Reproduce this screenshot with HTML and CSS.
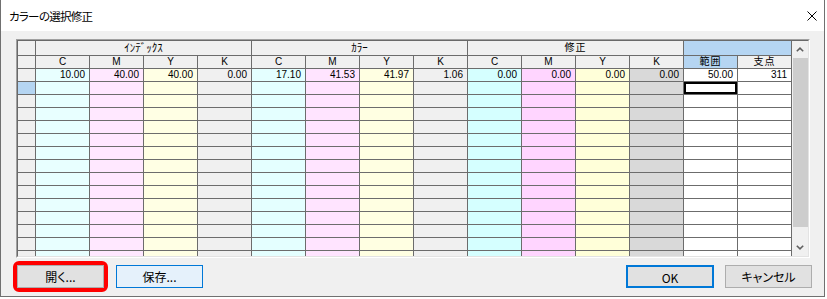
FILE: index.html
```html
<!DOCTYPE html>
<html lang="ja">
<head>
  <meta charset="UTF-8">
  <title>カラーの選択修正</title>
  <link rel="stylesheet" href="styles.css">
</head>
<body>
  <div id="dialog">
    <div class="titlebar">
      <span class="title">カラーの選択修正</span>
      <svg class="close" width="10" height="10" viewBox="0 0 10 10"><path d="M0.5 0.5L9.5 9.5M9.5 0.5L0.5 9.5" stroke="#000" stroke-width="1" fill="none"/></svg>
    </div>
    <div class="gridarea">
      <div class="grid">
        <div class="grid-in">
          <div class="cells">
            <table>
              <colgroup>
                <col class="rh">
                <col class="ic"><col class="im"><col class="iy"><col class="ik">
                <col class="cc"><col class="cm"><col class="cy"><col class="ck">
                <col class="sc"><col class="sm"><col class="sy"><col class="sk">
                <col class="rg"><col class="pt">
              </colgroup>
              <tr class="h1"><th></th><th colspan="4">ｲﾝﾃﾞｯｸｽ</th><th colspan="4">ｶﾗｰ</th><th colspan="4" class="kanji">修正</th><th colspan="2" class="sel"></th></tr>
              <tr class="h2"><th></th><th>C</th><th>M</th><th>Y</th><th>K</th><th>C</th><th>M</th><th>Y</th><th>K</th><th>C</th><th>M</th><th>Y</th><th>K</th><th class="sel kanji">範囲</th><th class="kanji">支点</th></tr>
              <tr><th></th><td>10.00</td><td>40.00</td><td>40.00</td><td>0.00</td><td>17.10</td><td>41.53</td><td>41.97</td><td>1.06</td><td>0.00</td><td>0.00</td><td>0.00</td><td>0.00</td><td>50.00</td><td>311</td></tr>
              <tr><th class="sel"></th><td></td><td></td><td></td><td></td><td></td><td></td><td></td><td></td><td></td><td></td><td></td><td></td><td class="focus"></td><td></td></tr>
              <tr><th></th><td></td><td></td><td></td><td></td><td></td><td></td><td></td><td></td><td></td><td></td><td></td><td></td><td></td><td></td></tr>
              <tr><th></th><td></td><td></td><td></td><td></td><td></td><td></td><td></td><td></td><td></td><td></td><td></td><td></td><td></td><td></td></tr>
              <tr><th></th><td></td><td></td><td></td><td></td><td></td><td></td><td></td><td></td><td></td><td></td><td></td><td></td><td></td><td></td></tr>
              <tr><th></th><td></td><td></td><td></td><td></td><td></td><td></td><td></td><td></td><td></td><td></td><td></td><td></td><td></td><td></td></tr>
              <tr><th></th><td></td><td></td><td></td><td></td><td></td><td></td><td></td><td></td><td></td><td></td><td></td><td></td><td></td><td></td></tr>
              <tr><th></th><td></td><td></td><td></td><td></td><td></td><td></td><td></td><td></td><td></td><td></td><td></td><td></td><td></td><td></td></tr>
              <tr><th></th><td></td><td></td><td></td><td></td><td></td><td></td><td></td><td></td><td></td><td></td><td></td><td></td><td></td><td></td></tr>
              <tr><th></th><td></td><td></td><td></td><td></td><td></td><td></td><td></td><td></td><td></td><td></td><td></td><td></td><td></td><td></td></tr>
              <tr><th></th><td></td><td></td><td></td><td></td><td></td><td></td><td></td><td></td><td></td><td></td><td></td><td></td><td></td><td></td></tr>
              <tr><th></th><td></td><td></td><td></td><td></td><td></td><td></td><td></td><td></td><td></td><td></td><td></td><td></td><td></td><td></td></tr>
              <tr><th></th><td></td><td></td><td></td><td></td><td></td><td></td><td></td><td></td><td></td><td></td><td></td><td></td><td></td><td></td></tr>
              <tr><th></th><td></td><td></td><td></td><td></td><td></td><td></td><td></td><td></td><td></td><td></td><td></td><td></td><td></td><td></td></tr>
              <tr><th></th><td></td><td></td><td></td><td></td><td></td><td></td><td></td><td></td><td></td><td></td><td></td><td></td><td></td><td></td></tr>
            </table>
          </div>
          <div class="vscroll">
            <div class="arrow"><svg width="8" height="5" viewBox="0 0 8 5"><path d="M0.8 4.3L4 1.2L7.2 4.3" stroke="#606060" stroke-width="1.6" fill="none"/></svg></div>
            <div class="thumb"></div>
            <div class="track"></div>
            <div class="arrow"><svg width="8" height="5" viewBox="0 0 8 5"><path d="M0.8 0.7L4 3.8L7.2 0.7" stroke="#606060" stroke-width="1.6" fill="none"/></svg></div>
          </div>
        </div>
      </div>
    </div>
    <div class="buttons">
      <div class="left">
        <span class="mark"><button class="btn">開く...</button></span>
        <button class="btn hover">保存...</button>
      </div>
      <div class="right">
        <button class="btn default">OK</button>
        <button class="btn">キャンセル</button>
      </div>
    </div>
  </div>
</body>
</html>
```

FILE: styles.css
```css
* {margin: 0; padding: 0; box-sizing: border-box;}
body{
  background: #fff;
  font-family: "Noto Sans CJK JP", sans-serif;
}
#dialog {
  width: 825px;
  height: 297px;
  border: 1px solid #707070;
  border-top: 0;
  background: #f0f0f0;
}
.titlebar {
  height: 31px;
  background: #fff;
  display: flex;
  align-items: center;
  justify-content: space-between;
  padding: 0 7px 0 8px;
}
.title {
  font-size: 11.5px;
  line-height: 14px;
  letter-spacing: -0.7px;
  font-feature-settings: "palt";
  color: #000;
}
.gridarea {
  padding: 8px 0 0 15px;
}
.grid {
  width: 794px;
  height: 219px;
  border: 1px solid;
  border-color: #a0a0a0 #fff #fff #a0a0a0;
}
.grid-in {
  height: 217px;
  border: 1px solid;
  border-color: #696969 #e3e3e3 #e3e3e3 #696969;
  display: flex;
}
.cells {
  width: 774px;
  height: 215px;
  overflow: hidden;
  background: #fff;
}
table {
  width: 774px;
  table-layout: fixed;
  border-collapse: separate;
  border-spacing: 0;
  font-family: "Liberation Sans", "Noto Sans CJK JP", sans-serif;
  font-size: 10px;
  color: #000;
}
col { width: 54px; }
col.rh { width: 18px; }
col.ic { background: #e8ffff; }
col.im { background: #ffe8ff; }
col.iy { background: #ffffe4; }
col.ik { background: #f0f0f0; }
col.cc { background: #e4ffff; }
col.cm { background: #ffe4ff; }
col.cy { background: #ffffe2; }
col.ck { background: #f0f0f0; }
col.sc { background: #d5ffff; }
col.sm { background: #ffd5ff; }
col.sy { background: #ffffd9; }
col.sk { background: #d9d9d9; }
col.rg, col.pt { background: #fff; }
th, td {
  height: 13px;
  padding: 0 4px;
  line-height: 12px;
  border-right: 1px solid #6c6c6c;
  border-bottom: 1px solid #6c6c6c;
  white-space: nowrap;
  overflow: hidden;
}
th {
  background: #f0f0f0;
  font-weight: normal;
  text-align: center;
}
td { text-align: right; }
tr.h1 th {
  height: 15px;
  line-height: 14px;
  font-size: 11px;
}
.kanji {
  font-size: 10px;
  letter-spacing: 1px;
}
tr.h1 th.kanji { font-size: 10px; }
th.sel { background: #b5d5f2; }
td.focus { box-shadow: inset 0 0 0 2px #000; }
.vscroll {
  width: 16px;
  height: 215px;
  display: flex;
  flex-direction: column;
  background: #f0f0f0;
}
.arrow {
  height: 17px;
  display: flex;
  align-items: center;
  justify-content: center;
}
.thumb {
  height: 169px;
  width: 15px;
  margin-left: 1px;
  background: #cdcdcd;
}
.track { flex: 1; }
.buttons {
  display: flex;
  justify-content: space-between;
  align-items: center;
  padding: 3px 12px 0 12px;
}
.left, .right {
  display: flex;
  align-items: center;
}
.left { gap: 8px; }
.right { gap: 11px; }
.mark {
  display: flex;
  border: 4px solid #ff0000;
  border-radius: 6px;
}
.btn {
  width: 87px;
  height: 23px;
  font-family: "Noto Sans CJK JP", sans-serif;
  font-size: 12px;
  font-weight: normal;
  line-height: 21px;
  font-feature-settings: "palt";
  color: #000;
  background: #e1e1e1;
  border: 1px solid #adadad;
}
.btn.hover {
  background: #e5f1fb;
  border-color: #0078d7;
}
.btn.default {
  width: 88px;
  border: 2px solid #0078d7;
}
```
